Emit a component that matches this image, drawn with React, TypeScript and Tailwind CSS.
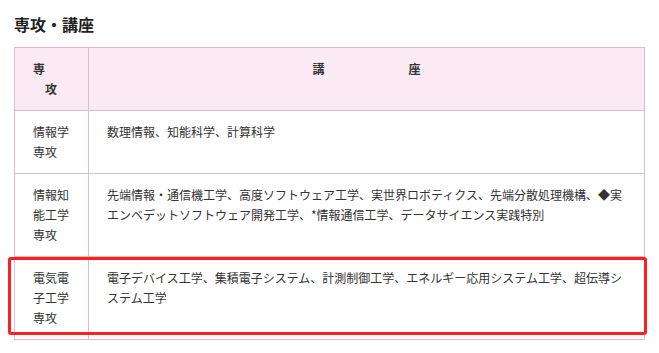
const rows = [
  { major: ["情報学", "専攻"], courses: "数理情報、知能科学、計算科学" },
  {
    major: ["情報知", "能工学", "専攻"],
    courses:
      "先端情報・通信機工学、高度ソフトウェア工学、実世界ロボティクス、先端分散処理機構、◆実エンベデットソフトウェア開発工学、*情報通信工学、データサイエンス実践特別",
  },
  {
    major: ["電気電", "子工学", "専攻"],
    courses:
      "電子デバイス工学、集積電子システム、計測制御工学、エネルギー応用システム工学、超伝導システム工学",
  },
];

export default function App() {
  return (
    <div
      className="relative min-h-[353px] w-[659px] bg-white pl-[14px] pt-[12px] text-[#333]"
      style={{ fontFamily: '"Noto Sans CJK JP", "Noto Sans", sans-serif' }}
    >
      <h2 className="text-[16px] font-bold leading-[24px] text-[#222]">専攻・講座</h2>

      <table className="mt-[11px] w-[631px] table-fixed border-collapse text-[12px] leading-[20px]">
        <colgroup>
          <col className="w-[74px]" />
          <col />
        </colgroup>
        <thead>
          <tr className="bg-[#fbeaf3]">
            <th className="border border-[#dcbccc] px-[18px] py-[11px] text-left font-bold">
              <span className="block">専</span>
              <span className="block pl-3">攻</span>
            </th>
            <th className="whitespace-pre border border-[#dcbccc] px-[18px] py-[11px] text-center align-top font-bold">
              講　　　　　　　座
            </th>
          </tr>
        </thead>
        <tbody>
          {rows.map((r) => (
            <tr key={r.major.join("")}>
              <td className="border border-[#dcbccc] px-[18px] py-[11px] align-top">
                {r.major.map((m) => (
                  <span key={m} className="block">
                    {m}
                  </span>
                ))}
              </td>
              <td className="border border-[#dcbccc] px-[18px] py-[11px] align-top">{r.courses}</td>
            </tr>
          ))}
        </tbody>
      </table>

      {/* highlight around the last row */}
      <div className="pointer-events-none absolute left-[8px] top-[257px] h-[78px] w-[639px] rounded-[3px] border-[3px] border-[#ff1f1f]" />
    </div>
  );
}
